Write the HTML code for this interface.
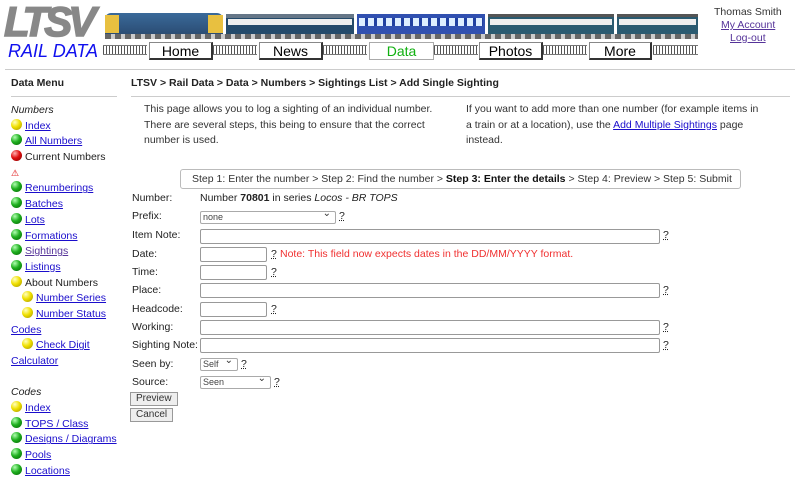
<!DOCTYPE html>
<html><head><meta charset="utf-8"><style>
*{margin:0;padding:0;box-sizing:border-box}
body{width:800px;height:470px;overflow:hidden;background:#fff;font-family:"Liberation Sans",Arial,sans-serif;font-size:10.5px;color:#222;position:relative}
.a{position:absolute;white-space:nowrap}
a{color:#1a0dcc;text-decoration:underline}
.b{display:inline-block;width:11px;height:11px;border-radius:50%;vertical-align:-1px;margin-right:3px}
.y{background:radial-gradient(circle at 35% 30%,#ffffc0,#f0e000 45%,#a09000)}
.g{background:radial-gradient(circle at 35% 30%,#b0ffb0,#20b020 45%,#006000)}
.r{background:radial-gradient(circle at 35% 30%,#ffb0b0,#e01010 45%,#800000)}
.btn{position:absolute;top:42px;height:18px;background:#fff;border:1px solid #888;border-right:2px solid #333;border-bottom:2px solid #333;font-size:14px;text-align:center;line-height:16px;color:#000}
.trk{position:absolute;top:45px;height:10px;background:repeating-linear-gradient(90deg,#555 0 1px,transparent 1px 3px);border-top:1px solid #777;border-bottom:1px solid #777}
.lbl{position:absolute;left:132px}
.in{position:absolute;left:200px;height:15px;border:1px solid #999;border-radius:2px;background:#fff}
.sel{position:absolute;left:200px;height:13px;border:1px solid #aaa;border-radius:2px;font-size:9px;color:#444;padding-left:2px;line-height:11px;background:#fff}
.sel:after{content:"\2304";position:absolute;right:4px;top:-4px;font-size:10px;color:#333}
.q{position:absolute;text-decoration:underline dotted}
.pb{position:absolute;left:130px;height:14px;border:1px solid #999;background:#eee;font-size:10px;line-height:12px;padding:0 5px;color:#333}
.sb div{height:15.7px;line-height:15.7px;white-space:nowrap}
.ind{padding-left:11px}
</style></head><body>
<div class="a" style="left:4px;top:0px;font-size:42px;font-weight:900;font-style:italic;color:#888;letter-spacing:-4px;-webkit-text-stroke:1.5px #888;line-height:44px">LTSV</div>
<div class="a" style="left:8px;top:41px;font-size:18px;font-style:italic;color:#1010ee">RAIL DATA</div>
<div class="a" style="left:105px;top:13px;width:118px;height:23px;background:linear-gradient(#3a6a9a,#2a4a70);border-radius:6px 6px 2px 2px"></div>
<div class="a" style="left:105px;top:15px;width:14px;height:18px;background:#e8c040"></div>
<div class="a" style="left:208px;top:15px;width:15px;height:18px;background:#e8c040"></div>
<div class="a" style="left:226px;top:14px;width:128px;height:20px;background:#244a6a;border-top:4px solid #678"></div>
<div class="a" style="left:228px;top:19px;width:124px;height:6px;background:#eee"></div>
<div class="a" style="left:357px;top:14px;width:128px;height:20px;background:#3050b0"></div>
<div class="a" style="left:359px;top:18px;width:124px;height:8px;background:repeating-linear-gradient(90deg,#ddeeff 0 6px,#2040a0 6px 9px)"></div>
<div class="a" style="left:488px;top:14px;width:126px;height:20px;background:#2a5a70;border-top:3px solid #555"></div>
<div class="a" style="left:490px;top:19px;width:122px;height:6px;background:#eee"></div>
<div class="a" style="left:617px;top:14px;width:81px;height:20px;background:#2a5a70;border-top:3px solid #555"></div>
<div class="a" style="left:619px;top:19px;width:77px;height:6px;background:#eee"></div>
<div class="a" style="left:105px;top:34px;width:593px;height:5px;background:repeating-linear-gradient(90deg,#666 0 6px,#ccc 6px 10px)"></div>
<div class="trk" style="left:103px;width:44px"></div>
<div class="trk" style="left:213px;width:44px"></div>
<div class="trk" style="left:323px;width:44px"></div>
<div class="trk" style="left:434px;width:44px"></div>
<div class="trk" style="left:543px;width:44px"></div>
<div class="trk" style="left:653px;width:45px"></div>
<div class="btn" style="left:149px;width:64px">Home</div>
<div class="btn" style="left:259px;width:64px">News</div>
<div class="btn" style="left:369px;width:65px;color:#10b010;border:1px solid #aaa">Data</div>
<div class="btn" style="left:479px;width:64px">Photos</div>
<div class="btn" style="left:589px;width:63px">More</div>
<div class="a" style="left:714px;top:6px;color:#333">Thomas Smith</div>
<div class="a" style="left:721px;top:19px"><a style="color:#553399">My Account</a></div>
<div class="a" style="left:730px;top:32px"><a style="color:#553399">Log-out</a></div>
<div class="a" style="left:5px;top:69px;width:790px;height:1px;background:#ccc"></div>

<div class="a" style="left:11px;top:77px;font-weight:bold">Data Menu</div>
<div class="a" style="left:11px;top:96px;width:106px;height:1px;background:#ccc"></div>
<div class="a" style="left:131px;top:77px;font-weight:bold">LTSV &gt; Rail Data &gt; Data &gt; Numbers &gt; Sightings List &gt; Add Single Sighting</div>
<div class="a" style="left:131px;top:96px;width:659px;height:1px;background:#ccc"></div>

<div class="a sb" style="left:11px;top:103px">
<div><i>Numbers</i></div>
<div><span class="b y"></span><a>Index</a></div>
<div><span class="b g"></span><a>All Numbers</a></div>
<div><span class="b r"></span>Current Numbers</div>
<div><span style="color:#d00;font-size:9px">&#9888;</span></div>
<div><span class="b g"></span><a>Renumberings</a></div>
<div><span class="b g"></span><a>Batches</a></div>
<div><span class="b g"></span><a>Lots</a></div>
<div><span class="b g"></span><a>Formations</a></div>
<div><span class="b g"></span><a style="color:#553399">Sightings</a></div>
<div><span class="b g"></span><a>Listings</a></div>
<div><span class="b y"></span>About Numbers</div>
<div class="ind"><span class="b y"></span><a>Number Series</a></div>
<div class="ind"><span class="b y"></span><a>Number Status</a></div>
<div><a>Codes</a></div>
<div class="ind"><span class="b y"></span><a>Check Digit</a></div>
<div><a>Calculator</a></div>
<div></div>
<div><i>Codes</i></div>
<div><span class="b y"></span><a>Index</a></div>
<div><span class="b g"></span><a>TOPS / Class</a></div>
<div><span class="b g"></span><a>Designs / Diagrams</a></div>
<div><span class="b g"></span><a>Pools</a></div>
<div><span class="b g"></span><a>Locations</a></div>
</div>

<div class="a" style="left:144px;top:102px;line-height:15.7px;color:#333">This page allows you to log a sighting of an individual number.<br>There are several steps, this being to ensure that the correct<br>number is used.</div>
<div class="a" style="left:466px;top:102px;line-height:15.7px;color:#333">If you want to add more than one number (for example items in<br>a train or at a location), use the <a>Add Multiple Sightings</a> page<br>instead.</div>

<div class="a" style="left:180px;top:169px;width:561px;height:20px;border:1px solid #bbb;border-radius:3px;line-height:18px;padding-left:11px;color:#333">Step 1: Enter the number &gt; Step 2: Find the number &gt; <b style="color:#111">Step 3: Enter the details</b> &gt; Step 4: Preview &gt; Step 5: Submit</div>

<div class="lbl" style="top:192px">Number:</div>
<div class="a" style="left:200px;top:192px">Number <b>70801</b> in series <i>Locos - BR TOPS</i></div>
<div class="lbl" style="top:210px">Prefix:</div><div class="sel" style="top:211px;width:136px">none</div><div class="q" style="left:339px;top:210px">?</div>
<div class="lbl" style="top:229px">Item Note:</div><div class="in" style="top:229px;width:460px"></div><div class="q" style="left:663px;top:229px">?</div>
<div class="lbl" style="top:248px">Date:</div><div class="in" style="top:247px;width:67px"></div><div class="q" style="left:271px;top:248px">?</div>
<div class="a" style="left:280px;top:248px;color:#f03030">Note: This field now expects dates in the DD/MM/YYYY format.</div>
<div class="lbl" style="top:266px">Time:</div><div class="in" style="top:265px;width:67px"></div><div class="q" style="left:271px;top:266px">?</div>
<div class="lbl" style="top:284px">Place:</div><div class="in" style="top:283px;width:460px"></div><div class="q" style="left:663px;top:284px">?</div>
<div class="lbl" style="top:303px">Headcode:</div><div class="in" style="top:302px;width:67px"></div><div class="q" style="left:271px;top:303px">?</div>
<div class="lbl" style="top:321px">Working:</div><div class="in" style="top:320px;width:460px"></div><div class="q" style="left:663px;top:321px">?</div>
<div class="lbl" style="top:339px">Sighting Note:</div><div class="in" style="top:338px;width:460px"></div><div class="q" style="left:663px;top:339px">?</div>
<div class="lbl" style="top:358px">Seen by:</div><div class="sel" style="top:358px;width:38px">Self</div><div class="q" style="left:241px;top:358px">?</div>
<div class="lbl" style="top:376px">Source:</div><div class="sel" style="top:376px;width:71px">Seen</div><div class="q" style="left:274px;top:376px">?</div>
<div class="pb" style="top:392px">Preview</div>
<div class="pb" style="top:408px">Cancel</div>
</body></html>
